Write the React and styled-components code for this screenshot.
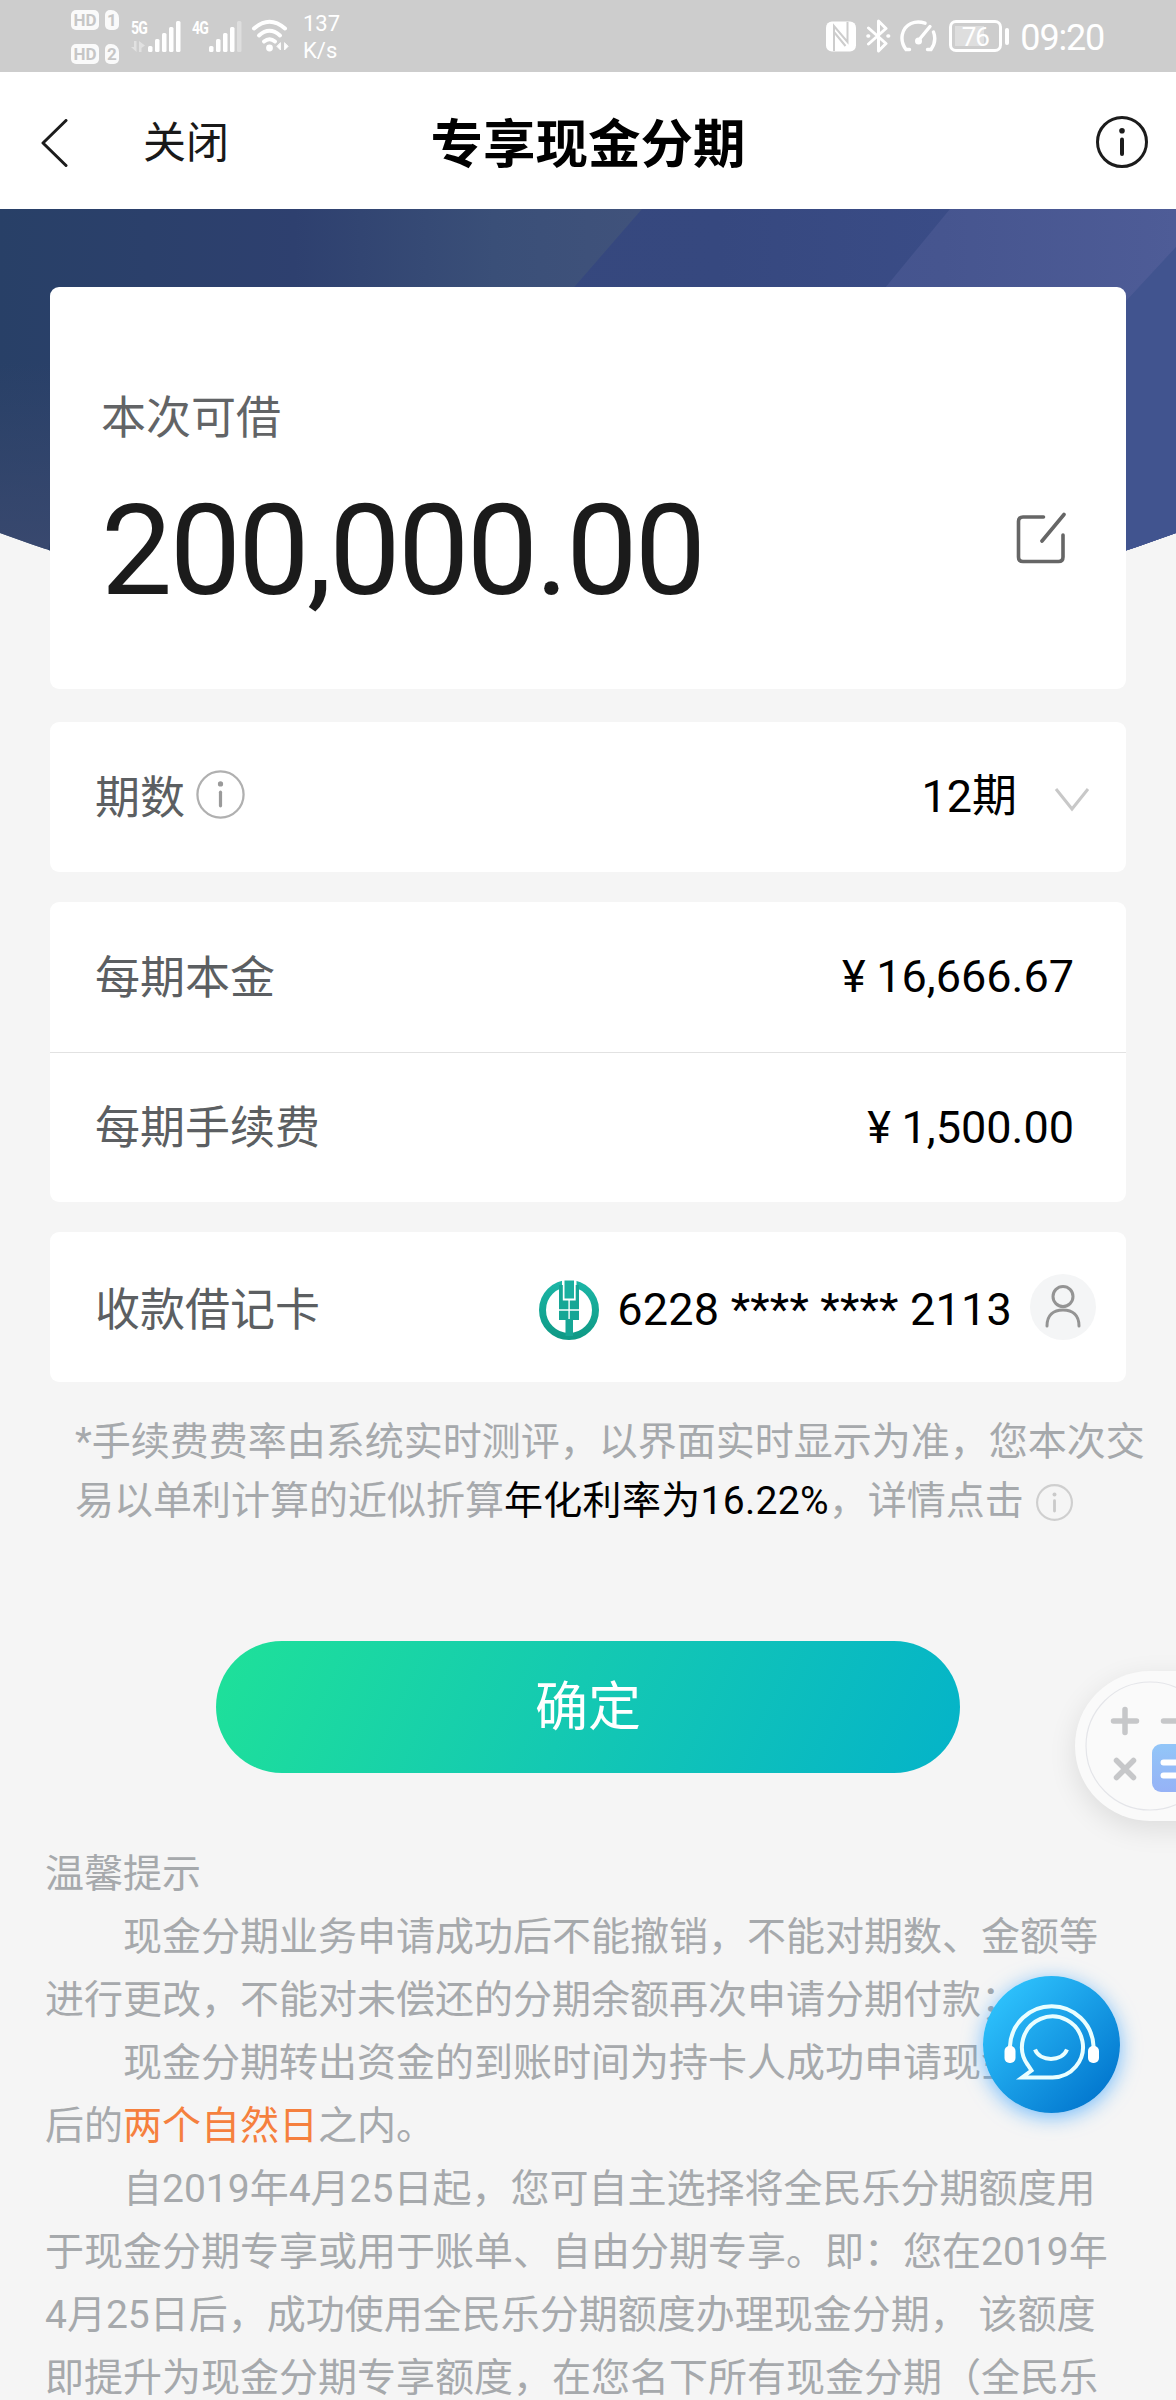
import React from 'react';
import styled, { createGlobalStyle } from 'styled-components';

const GlobalStyle = createGlobalStyle`
  * { box-sizing: border-box; }
  html, body { margin: 0; padding: 0; background: #f5f5f5; }
  svg { display: block; flex: none; }
`;

const Page = styled.div`
  position: relative;
  width: 1176px;
  height: 2400px;
  overflow: hidden;
  background: #f5f5f5;
  color: #000;
  font-family: Roboto, 'Noto Sans CJK SC', sans-serif;
  white-space: nowrap;
`;

/* ---------- status bar ---------- */

const StatusBar = styled.header`
  display: flex;
  justify-content: space-between;
  height: 72px;
  padding: 0 72px 0 71px;
  background: #cdcdcd;
  color: #fff;
`;

const StatusGroup = styled.div`
  display: flex;
  align-items: ${(p) => p.$align || 'flex-start'};
`;

const HdStack = styled.div`
  display: flex;
  flex-direction: column;
  gap: 14px;
  padding-top: 10px;
`;

const HdRow = styled.div`
  display: flex;
  gap: 6px;
`;

const HdBadge = styled.span`
  width: ${(p) => p.$width}px;
  height: 20px;
  border-radius: 5px ${(p) => (p.$sim ? 8 : 5)}px 5px 5px;
  background: #fafafa;
  color: #c6c6c6;
  font-size: 17px;
  font-weight: 700;
  line-height: 20px;
  text-align: center;
`;

const Signal = styled.div`
  display: flex;
  margin-left: ${(p) => p.$gap}px;
  padding-top: 18px;
`;

const Generation = styled.span`
  width: 17px;
  font-size: 18px;
  font-weight: 700;
  line-height: 19px;
  letter-spacing: -1px;
  transform: scaleX(0.78);
  transform-origin: left;
`;

const NetSpeed = styled.div`
  margin-left: 12px;
  padding-top: 10px;
  font-size: 22px;
  line-height: 27px;
`;

const StatusIcon = styled.span`
  margin-left: ${(p) => p.$gap}px;
`;

const Battery = styled.div`
  display: flex;
  align-items: center;
  margin-left: 12px;
`;

const BatteryBody = styled.div`
  width: 53px;
  height: 32px;
  padding: 2px 3px 0 2px;
  border: 3px solid #fff;
  border-radius: 7px;
  background: linear-gradient(90deg, #dedede 70%, transparent 70%) 3px 3px / 41px 20px no-repeat;
  font-size: 26px;
  line-height: 24px;
  letter-spacing: -1px;
  text-align: center;
`;

const BatteryTip = styled.div`
  width: 4px;
  height: 17px;
  margin-left: 3px;
  border-radius: 2px;
  background: #fff;
`;

const Clock = styled.span`
  margin: 3px 0 0 11px;
  font-size: 36px;
  line-height: 42px;
  letter-spacing: -1.2px;
`;

const BarsIcon = ({ faded }) => (
  <svg width="33" height="36" viewBox="0 0 33 36" fill="#fff">
    <rect x="0" y="28" width="4.5" height="6" rx="1.5" />
    <rect x="7" y="21" width="4.5" height="13" rx="1.5" />
    <rect x="14" y="15" width="4.5" height="19" rx="1.5" />
    <rect x="21" y="9" width="4.5" height="25" rx="1.5" />
    <rect x="28" y="3" width="4.5" height="31" rx="1.5" opacity={faded ? 0.35 : 1} />
  </svg>
);

const TrafficMark = styled.svg`
  margin: 23px -12px 0 -17px;
  opacity: 0.4;
`;

const TrafficIcon = () => (
  <TrafficMark width="14" height="11" viewBox="0 0 14 11" fill="#fff">
    <path d="M5.500 0 V11 L0 6 H3 V0 Z M8 0 V11 H10.500 V7 L14 4.500 Z" />
  </TrafficMark>
);

const WifiIcon = () => (
  <svg width="40" height="34" viewBox="0 0 40 34" fill="none" stroke="#fff" strokeWidth="4" strokeLinecap="round">
    <path d="M3 10.500 Q18.500 -3 34 10.500" />
    <path d="M8 17.500 Q18.500 8 29 17.500" />
    <path d="M13 23.500 Q18.500 19 24 23.500" />
    <circle cx="18.500" cy="30" r="3.400" fill="#fff" stroke="none" />
    <path d="M29.500 25 V32 L26 28.500 Z M33.500 25 V32 L37 28.500 Z" fill="#fff" stroke="#fff" strokeWidth="0.800" />
  </svg>
);

const NfcIcon = () => (
  <svg width="30" height="31" viewBox="0 0 30 31">
    <rect x="0" y="0.500" width="30" height="30" rx="6" fill="#fff" />
    <path
      d="M8 30 V5 L21.500 21 V1 M8 11 L19.500 25"
      fill="none"
      stroke="#cdcdcd"
      strokeWidth="2"
    />
  </svg>
);

const BluetoothIcon = () => (
  <svg width="25" height="34" viewBox="0 0 25 34" fill="none" stroke="#fff" strokeWidth="3" strokeLinejoin="round" strokeLinecap="round">
    <path d="M2.500 9 L20 24.500 L12.500 32 V2 L20 9.500 L2.500 25" />
    <path d="M2 17 h0.600 M22 17 h0.600" strokeWidth="3.600" />
  </svg>
);

const GaugeIcon = () => (
  <svg width="37" height="33" viewBox="0 0 37 33" fill="none" stroke="#fff" strokeWidth="3.400" strokeLinecap="round">
    <path d="M9.500 29.500 H6 C-1 20 1.500 8 11 3.500 Q17.500 0.800 25 3.200" />
    <path d="M33.500 12 Q37 21 31 29.500 H27.500" />
    <path d="M30 6.500 L20.500 18" />
    <circle cx="18.500" cy="21" r="3.500" fill="#fff" stroke="none" />
  </svg>
);

/* ---------- navigation ---------- */

const NavBar = styled.nav`
  display: grid;
  grid-template-columns: 1fr auto 1fr;
  align-items: center;
  height: 137px;
  padding: 0 28px 0 41px;
  background: #fff;
`;

const NavLeft = styled.div`
  display: flex;
  align-items: center;
  gap: 75px;
  margin-top: 5px;
`;

const CloseLabel = styled.span`
  color: #191919;
  font-size: 43px;
  line-height: 50px;
`;

const NavTitle = styled.h1`
  margin: 9px 0 0 -13px;
  font-size: 52.5px;
  font-weight: 700;
  line-height: 60px;
`;

const NavRight = styled.div`
  display: flex;
  justify-content: flex-end;
  padding-top: 3px;
`;

const BackIcon = () => (
  <svg width="27" height="49" viewBox="0 0 27 49" fill="none" stroke="#1c1c1c" strokeWidth="3" strokeLinecap="round" strokeLinejoin="round">
    <path d="M25 1.500 L2 24 L25 46.500" />
  </svg>
);

const InfoIcon = ({ size, ring, mark, stroke }) => (
  <svg width={size} height={size} viewBox="0 0 52 52" fill="none">
    <circle cx="26" cy="26" r="24.500" stroke={ring} strokeWidth={stroke} />
    <circle cx="26" cy="14.800" r="2.800" fill={mark} />
    <path d="M26 23.500 V38" stroke={mark} strokeWidth={stroke + 1} strokeLinecap="round" />
  </svg>
);

/* ---------- amount ---------- */

const Hero = styled.section`
  display: grid;
  grid-template-columns: 1176px;
  align-items: start;
  & > * { grid-area: 1 / 1; }
`;

const AmountCard = styled.div`
  display: flex;
  flex-direction: column;
  z-index: 1;
  width: 1076px;
  height: 402px;
  margin: 78px 0 0 50px;
  padding: 103px 60px 0 51px;
  border-radius: 9px;
  background: #fff;
`;

const AmountLabel = styled.div`
  color: #626466;
  font-size: 45px;
  line-height: 58px;
`;

const AmountRow = styled.div`
  display: flex;
  align-items: center;
  justify-content: space-between;
  height: 150px;
  margin-top: 15px;
`;

const Amount = styled.div`
  color: #1b1b1b;
  font-size: 127px;
  line-height: 150px;
  letter-spacing: -2.7px;
  padding-top: 26px;
`;

const Banner = () => (
  <svg width="1176" height="440" viewBox="0 0 1176 440">
    <defs>
      <linearGradient id="base" x1="0" y1="0" x2="1" y2="0">
        <stop offset="0" stopColor="#284067" />
        <stop offset="0.250" stopColor="#2e406f" />
        <stop offset="0.420" stopColor="#3a4f78" />
        <stop offset="0.540" stopColor="#40527b" />
      </linearGradient>
      <linearGradient id="mid" x1="0" y1="0" x2="1" y2="0">
        <stop offset="0" stopColor="#35477b" />
        <stop offset="0.500" stopColor="#36487f" />
        <stop offset="1" stopColor="#3e508e" />
      </linearGradient>
      <linearGradient id="light" x1="0" y1="0" x2="1" y2="0">
        <stop offset="0" stopColor="#3e508c" />
        <stop offset="0.600" stopColor="#46558f" />
        <stop offset="1" stopColor="#4e5c97" />
      </linearGradient>
      <linearGradient id="leftFade" x1="0" y1="0" x2="0" y2="1">
        <stop offset="0.450" stopColor="#3a496f" stopOpacity="0" />
        <stop offset="1" stopColor="#3a496f" stopOpacity="0.900" />
      </linearGradient>
      <clipPath id="curve">
        <path d="M0 0 H1176 V324 Q588 540 0 324 Z" />
      </clipPath>
    </defs>
    <g clipPath="url(#curve)">
      <rect width="1176" height="440" fill="url(#base)" />
      <rect width="200" height="340" fill="url(#leftFade)" />
      <path d="M30 440 L60 280 V440 Z" fill="#2b3d66" />
      <path d="M642 0 H1176 V440 H260 Z" fill="url(#mid)" />
      <path d="M950 0 H1176 V440 H588 Z" fill="url(#light)" />
      <path d="M1176 38 L1126 92 L1040 180 V440 H1176 Z" fill="#41548f" />
    </g>
  </svg>
);

const EditIcon = () => (
  <svg width="50" height="52" viewBox="0 0 50 52" fill="none" stroke="#666" strokeWidth="3.600" strokeLinecap="round">
    <path d="M27.500 5 H7 Q2.500 5 2.500 9.500 V45 Q2.500 49.500 7 49.500 H42.500 Q47 49.500 47 45 V23" />
    <path d="M48 2.500 L26 29" />
  </svg>
);

/* ---------- detail rows ---------- */

const Cards = styled.main`
  display: flex;
  flex-direction: column;
  gap: 30px;
  width: 1076px;
  margin: 33px 0 0 50px;
`;

const Card = styled.section`
  border-radius: 9px;
  background: #fff;
`;

const Row = styled.div`
  display: flex;
  align-items: center;
  justify-content: space-between;
  height: 150px;
  padding: ${(p) => p.$drop || 0}px ${(p) => p.$right}px 0 45px;
  & + & { border-top: 1px solid #e2e2e2; }
`;

const RowLabel = styled.div`
  display: flex;
  align-items: center;
  gap: 11px;
  padding-top: 3px;
  color: #5c5f62;
  font-size: 45px;
  line-height: 60px;
`;

const LabelInfo = styled.span`
  margin-top: -8px;
`;

const RowValue = styled.div`
  display: flex;
  align-items: center;
  font-size: 45px;
  line-height: 60px;
`;

const Term = styled.span`
  margin-right: 37px;
`;

const Cny = styled.span`
  width: 45px;
  text-align: center;
`;

const CardNumber = styled.span`
  margin: 0 18px 0 18px;
  letter-spacing: 0.2px;
`;

const Avatar = styled.span`
  display: grid;
  place-items: center;
  width: 66px;
  height: 66px;
  margin-top: -5px;
  border-radius: 50%;
  background: #f4f5f6;
`;

const ChevronWrap = styled.span`
  padding-top: 6px;
`;

const ChevronDown = () => (
  <svg width="36" height="26" viewBox="0 0 36 26" fill="none" stroke="#c8c8c8" strokeWidth="3">
    <path d="M2 2 L18 22 L34 2" />
  </svg>
);

const BankIcon = () => (
  <svg width="60" height="60" viewBox="0 0 60 60">
    <defs>
      <linearGradient id="bank" x1="0" y1="0" x2="0" y2="1">
        <stop offset="0" stopColor="#1bb5a5" />
        <stop offset="1" stopColor="#0f9a86" />
      </linearGradient>
    </defs>
    <circle cx="30" cy="30" r="26.500" fill="none" stroke="url(#bank)" strokeWidth="7" />
    <rect x="23" y="0" width="14.500" height="20" fill="#fff" />
    <path d="M25.500 0.500 H35 V18.500 H25.500 Z" fill="#1bb0a0" />
    <path
      d="M20 5 H23.800 V20.500 H29.400 V29.300 H20 Z M40 5 H36.700 V20.500 H30.800 V29.300 H40 Z M20 30.700 H29.400 V39 H30.800 V30.700 H40 V40 H34 V56 H26.500 V40 H20 Z"
      fill="#16a695"
    />
  </svg>
);

const PersonIcon = () => (
  <svg width="40" height="46" viewBox="0 0 40 46" fill="none" stroke="#949494" strokeWidth="3" strokeLinecap="round">
    <circle cx="20" cy="12.500" r="10" />
    <path d="M4 42 C4 31 10.500 26 20 26 C29.500 26 36 31 36 42" />
  </svg>
);

/* ---------- note and button ---------- */

const Note = styled.div`
  width: 1100px;
  margin: 31px 0 0 75px;
  color: #a6a9ac;
  font-size: 39px;
  line-height: 59px;
`;

const NoteLine = styled.div`
  display: flex;
  align-items: center;
  height: 59px;
`;

const Rate = styled.strong`
  color: #000;
  font-weight: 400;
  letter-spacing: 0.3px;
`;

const NoteInfo = styled.span`
  margin: 1px 0 0 12px;
`;

const ConfirmButton = styled.button`
  display: block;
  width: 744px;
  height: 132px;
  margin: 110px auto 0;
  padding: 2px 0 0;
  border: 0;
  border-radius: 66px;
  background: linear-gradient(115deg, #1ee09a 2%, #14c9b2 48%, #05b4c8 98%);
  color: #fff;
  font-family: inherit;
  font-size: 53px;
  line-height: 62px;
`;

/* ---------- tips ---------- */

const Tips = styled.section`
  margin: 70px 0 0 45px;
  color: #a6a9ac;
  font-size: 39px;
  line-height: 63px;
`;

const TipLine = styled.div`
  padding-left: ${(p) => (p.$indent ? '2em' : 0)};
  white-space: pre;
`;

const Highlight = styled.span`
  color: #f5803e;
`;

/* ---------- floating tools ---------- */

const Calculator = styled.aside`
  position: absolute;
  top: 1671px;
  left: 1075px;
  width: 190px;
  height: 150px;
  border-radius: 75px;
  background: #fafafa;
  box-shadow: 0 8px 28px rgba(0, 0, 0, 0.1);
`;

const ServiceButton = styled.aside`
  position: absolute;
  top: 1976px;
  left: 983px;
  width: 137px;
  height: 137px;
  border-radius: 50%;
  background: linear-gradient(135deg, #30c6ff 8%, #0073cc 92%);
  box-shadow: 0 4px 20px rgba(30, 150, 255, 0.6);
`;

const CalculatorIcon = () => (
  <svg width="101" height="150" viewBox="0 0 101 150" fill="none" strokeLinecap="round">
    <defs>
      <linearGradient id="equals" x1="0" y1="0" x2="0" y2="1">
        <stop offset="0" stopColor="#92c6f8" />
        <stop offset="1" stopColor="#96b2f6" />
      </linearGradient>
    </defs>
    <circle cx="75" cy="75" r="64" stroke="#e4e5e9" strokeWidth="1.200" />
    <path d="M38.500 50 H61.500 M50 38.500 V61.500 M88.500 50 H110" stroke="#c6c7c9" strokeWidth="5.500" />
    <path d="M41.500 89.500 L58.500 106.500 M58.500 89.500 L41.500 106.500" stroke="#c6c7c9" strokeWidth="5.500" />
    <rect x="77" y="73" width="48" height="48" rx="9" fill="url(#equals)" />
    <path d="M88.500 91.500 H115 M88.500 104.500 H115" stroke="#fff" strokeWidth="6" />
  </svg>
);

const HeadsetIcon = () => (
  <svg width="137" height="137" viewBox="0 0 137 137" fill="none" stroke="#e9feff" strokeWidth="4">
    <path d="M27 72 V70 A41.800 41.800 0 0 1 110.500 70 V72" />
    <path d="M69 101.500 A30.500 30.500 0 1 0 44.500 88.500 L48.500 94.500 L39 101.500 Z" strokeLinejoin="miter" />
    <path d="M52 73.500 C57 86 79 86 84 73.500" />
    <rect x="21.500" y="70" width="11" height="17" rx="5" fill="#fff" stroke="none" />
    <rect x="105" y="70" width="11" height="17" rx="5" fill="#fff" stroke="none" />
  </svg>
);

const tips = [
  { text: '温馨提示' },
  { text: '现金分期业务申请成功后不能撤销，不能对期数、金额等', indent: true },
  { text: '进行更改，不能对未偿还的分期余额再次申请分期付款；' },
  { text: '现金分期转出资金的到账时间为持卡人成功申请现金分期', indent: true },
  { text: '后的', highlight: '两个自然日', rest: '之内。' },
  { text: '自2019年4月25日起，您可自主选择将全民乐分期额度用', indent: true },
  { text: '于现金分期专享或用于账单、自由分期专享。即：您在2019年' },
  { text: '4月25日后，成功使用全民乐分期额度办理现金分期， 该额度' },
  { text: '即提升为现金分期专享额度，在您名下所有现金分期（全民乐' },
];

export default function App() {
  return (
    <>
      <GlobalStyle />
      <Page>
        <StatusBar>
          <StatusGroup>
            <HdStack>
              {[1, 2].map((sim) => (
                <HdRow key={sim}>
                  <HdBadge $width={28}>HD</HdBadge>
                  <HdBadge $width={14} $sim>{sim}</HdBadge>
                </HdRow>
              ))}
            </HdStack>
            <Signal $gap={12}>
              <Generation>5G</Generation>
              <TrafficIcon />
              <Signal as="span" $gap={15} $flush>
                <BarsShift />
              </Signal>
            </Signal>
            <Signal $gap={11}>
              <Generation>4G</Generation>
              <BarsIcon faded />
            </Signal>
            <Signal $gap={9}>
              <WifiIcon />
            </Signal>
            <NetSpeed>
              137
              <br />
              K/s
            </NetSpeed>
          </StatusGroup>
          <StatusGroup $align="center">
            <NfcIcon />
            <StatusIcon $gap={10}>
              <BluetoothIcon />
            </StatusIcon>
            <StatusIcon $gap={9}>
              <GaugeIcon />
            </StatusIcon>
            <Battery>
              <BatteryBody>76</BatteryBody>
              <BatteryTip />
            </Battery>
            <Clock>09:20</Clock>
          </StatusGroup>
        </StatusBar>

        <NavBar>
          <NavLeft>
            <BackIcon />
            <CloseLabel>关闭</CloseLabel>
          </NavLeft>
          <NavTitle>专享现金分期</NavTitle>
          <NavRight>
            <InfoIcon size={52} ring="#1c1c1c" mark="#1c1c1c" stroke={3} />
          </NavRight>
        </NavBar>

        <Hero>
          <Banner />
          <AmountCard>
            <AmountLabel>本次可借</AmountLabel>
            <AmountRow>
              <Amount>200,000.00</Amount>
              <EditIcon />
            </AmountRow>
          </AmountCard>
        </Hero>

        <Cards>
          <Card>
            <Row $right={36}>
              <RowLabel>
                期数
                <LabelInfo>
                  <InfoIcon size={49} ring="#b0b0b0" mark="#9a9a9a" stroke={2.4} />
                </LabelInfo>
              </RowLabel>
              <RowValue>
                <Term>12期</Term>
                <ChevronWrap>
                  <ChevronDown />
                </ChevronWrap>
              </RowValue>
            </Row>
          </Card>
          <Card>
            <Row $right={52}>
              <RowLabel>每期本金</RowLabel>
              <RowValue>
                <Cny>¥</Cny>16,666.67
              </RowValue>
            </Row>
            <Row $right={52}>
              <RowLabel>每期手续费</RowLabel>
              <RowValue>
                <Cny>¥</Cny>1,500.00
              </RowValue>
            </Row>
          </Card>
          <Card>
            <Row $right={30} $drop={5}>
              <RowLabel>收款借记卡</RowLabel>
              <RowValue>
                <BankIcon />
                <CardNumber>6228 **** **** 2113</CardNumber>
                <Avatar>
                  <PersonIcon />
                </Avatar>
              </RowValue>
            </Row>
          </Card>
        </Cards>

        <Note>
          <NoteLine>*手续费费率由系统实时测评，以界面实时显示为准，您本次交</NoteLine>
          <NoteLine>
            易以单利计算的近似折算<Rate>年化利率为16.22%</Rate>，详情点击
            <NoteInfo>
              <InfoIcon size={37} ring="#cfcfcf" mark="#cacaca" stroke={3} />
            </NoteInfo>
          </NoteLine>
        </Note>

        <ConfirmButton>确定</ConfirmButton>

        <Tips>
          {tips.map((tip) => (
            <TipLine key={tip.text} $indent={tip.indent}>
              {tip.text}
              {tip.highlight && <Highlight>{tip.highlight}</Highlight>}
              {tip.rest}
            </TipLine>
          ))}
        </Tips>

        <Calculator>
          <CalculatorIcon />
        </Calculator>
        <ServiceButton>
          <HeadsetIcon />
        </ServiceButton>
      </Page>
    </>
  );
}

const BarsSlot = styled.span`
  margin-top: -18px;
`;

function BarsShift() {
  return (
    <BarsSlot>
      <BarsIcon />
    </BarsSlot>
  );
}
